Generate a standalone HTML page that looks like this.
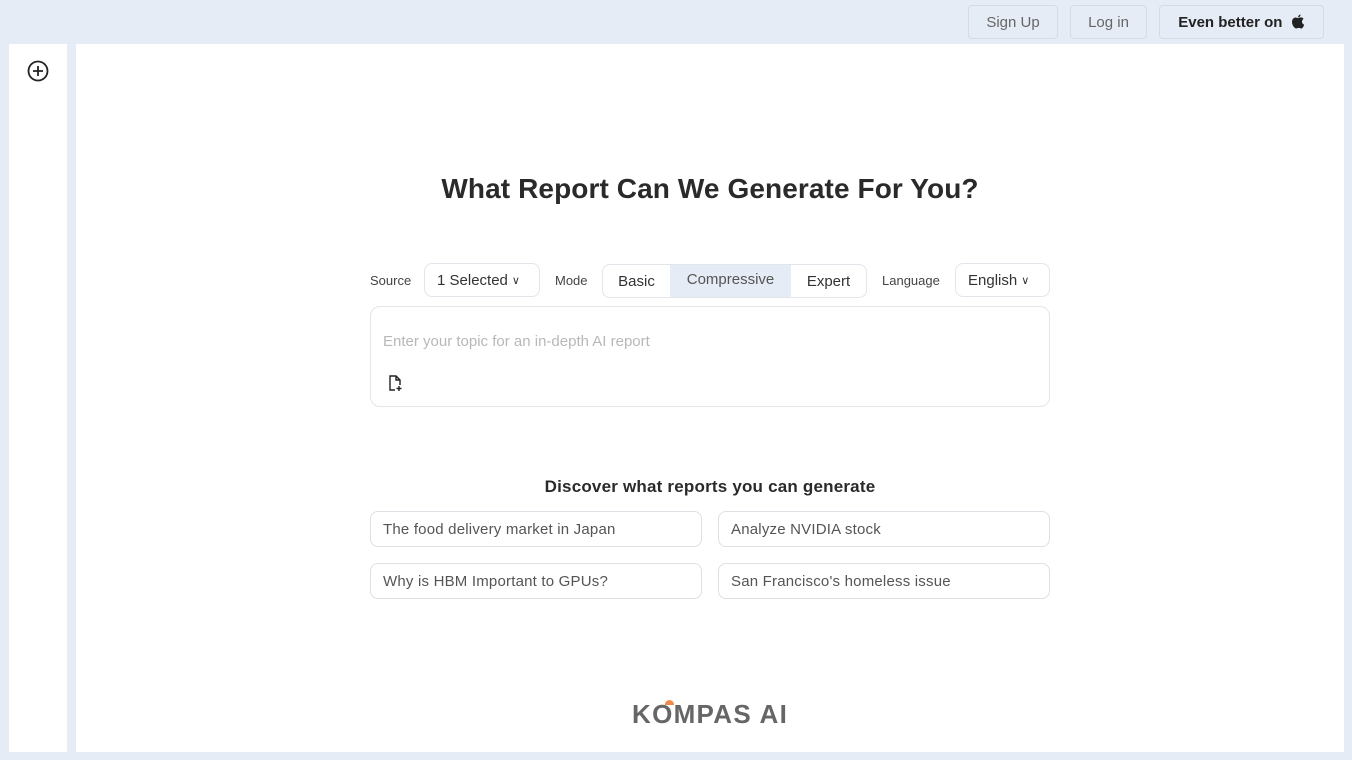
<!DOCTYPE html>
<html><head><style>
*{box-sizing:border-box;margin:0;padding:0}
body{width:1352px;height:760px;background:#e6ecf5;font-family:"Liberation Sans",sans-serif;position:relative;overflow:hidden;color:#333}
.btn{position:absolute;top:5px;height:34px;border:1px solid #d6dbe3;border-radius:4px;background:#e6ecf5;font-size:15px;color:#666;display:flex;align-items:center;justify-content:center}
.side{position:absolute;left:9px;top:44px;width:58px;height:708px;background:#fff}
.main{position:absolute;left:76px;top:44px;width:1268px;height:708px;background:#fff}
.abs{position:absolute}
.pill{position:absolute;height:34px;border:1px solid #e2e5ea;border-radius:8px;display:flex;align-items:center;font-size:15px;color:#333}
.sugg{position:absolute;width:332px;height:36px;border:1px solid #dcdfe4;border-radius:8px;font-size:15px;color:#555;padding-left:12px;line-height:35px;letter-spacing:0.2px}
.lbl{position:absolute;font-size:13px;color:#444;top:273px}
</style></head><body>
<div class="btn" style="left:968px;width:90px">Sign Up</div>
<div class="btn" style="left:1070px;width:77px">Log in</div>
<div class="btn" style="left:1159px;width:165px;color:#222;font-weight:bold">Even better on&nbsp;&nbsp;<svg width="14" height="16" viewBox="0 0 14 16"><path d="M9.5 0.5c.2 1.3-.9 2.8-2.3 2.8-.2-1.3 1-2.7 2.3-2.8zM7 4c1 0 1.8-.6 2.8-.6 1.2 0 2.2.6 2.8 1.5-2.4 1.4-2 4.9.6 5.8-.5 1.4-1.6 3.800-3 3.800-1 0-1.300-.6-2.500-.6s-1.600.6-2.500.6C3.600 14.500 1 11.200 1 8 1 5.300 2.700 3.500 4.500 3.500 5.500 3.500 6.200 4 7 4z" fill="#222"/></svg></div>
<div class="side"><svg class="abs" style="left:18px;top:16px" width="22" height="22" viewBox="0 0 22 22"><circle cx="11" cy="11" r="9.500" fill="none" stroke="#222" stroke-width="1.8"/><path d="M11 6v10M6 11h10" stroke="#222" stroke-width="1.8"/></svg></div>
<div class="main"></div>
<div class="abs" style="left:0;width:1420px;top:173px;text-align:center;font-size:28px;font-weight:bold;color:#2a2a2a;letter-spacing:0.1px">What Report Can We Generate For You?</div>
<div class="lbl" style="left:370px">Source</div>
<div class="pill" style="left:424px;top:263px;width:116px;padding-left:12px">1 Selected <span style="margin-left:4px;font-size:11px">&#8744;</span></div>
<div class="lbl" style="left:555px">Mode</div>
<div class="pill" style="left:602px;top:264px;width:265px;overflow:hidden">
<div style="width:67px;text-align:center">Basic</div><div style="width:121px;text-align:center;background:#e6ecf5;height:100%;line-height:30px;color:#555">Compressive</div><div style="flex:1;text-align:center">Expert</div></div>
<div class="lbl" style="left:882px">Language</div>
<div class="pill" style="left:955px;top:263px;width:95px;padding-left:12px">English <span style="margin-left:4px;font-size:11px">&#8744;</span></div>
<div class="abs" style="left:370px;top:306px;width:680px;height:101px;border:1px solid #e2e5ea;border-radius:10px"></div>
<div class="abs" style="left:383px;top:333px;font-size:15px;color:#b8b8b8">Enter your topic for an in-depth AI report</div>
<svg class="abs" style="left:388px;top:375px" width="16" height="17" viewBox="0 0 16 17"><path d="M7 15H2V1h6l4 4v5M8 1v4h4M11 11v5M8.500 13.500h5" fill="none" stroke="#222" stroke-width="1.4"/></svg>
<div class="abs" style="left:0;width:1420px;top:477px;text-align:center;font-size:17px;font-weight:bold;color:#2a2a2a;letter-spacing:0.2px">Discover what reports you can generate</div>
<div class="sugg" style="left:370px;top:511px">The food delivery market in Japan</div>
<div class="sugg" style="left:718px;top:511px">Analyze NVIDIA stock</div>
<div class="sugg" style="left:370px;top:563px">Why is HBM Important to GPUs?</div>
<div class="sugg" style="left:718px;top:563px">San Francisco's homeless issue</div>
<div class="abs" style="left:632px;top:699px;font-size:26px;font-weight:bold;color:#666;letter-spacing:1.3px">KOMPAS AI</div>
<div class="abs" style="left:665px;top:700px;width:9px;height:5px;background:#f08a4b;border-radius:5px 5px 0 0"></div>
</body></html>
